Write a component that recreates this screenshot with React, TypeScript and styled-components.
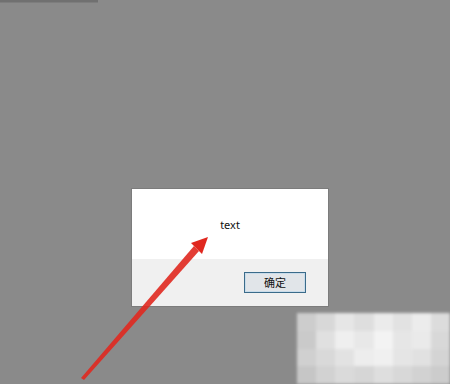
import * as React from 'react';
import styled, { createGlobalStyle } from 'styled-components';

const GlobalStyle = createGlobalStyle`
    html, body {
        margin: 0;
        padding: 0;
        background: #8a8a8a;
        font-family: 'Noto Sans', 'Liberation Sans', 'Noto Sans CJK SC', sans-serif;
    }
`;

const WATERMARK_CELLS = [
    '#cdcdcd', '#d8d8d8', '#e6e6e6', '#dedede', '#ebebeb', '#e2e2e2', '#ececec', '#dcdcdc',
    '#cacaca', '#e0e0e0', '#efefef', '#e8e8e8', '#f3f3f3', '#e6e6e6', '#eaeaea', '#d8d8d8',
    '#d0d0d0', '#d9d9d9', '#e2e2e2', '#ededed', '#f0f0f0', '#e5e5e5', '#e1e1e1', '#d4d4d4',
    '#c6c6c6', '#d2d2d2', '#dadada', '#d6d6d6', '#dedede', '#d8d8d8', '#d2d2d2', '#cccccc',
];

const App: React.FC = () => (
    <Root>
        <GlobalStyle />
        <TopLine />
        <Dialog>
            <MessageArea>
                <Message>text</Message>
            </MessageArea>
            <Footer>
                <OkButton>确定</OkButton>
            </Footer>
        </Dialog>
        <Arrow width="450" height="384" viewBox="0 0 450 384">
            <polygon points="81,378 84,380 199,251 194,246" fill="#e0281f" opacity="0.9" />
            <polygon points="208,237 191,243 202,254" fill="#e0281f" />
        </Arrow>
        <Watermark>
            {WATERMARK_CELLS.map((color, index) => (
                <WatermarkCell key={index} $color={color} />
            ))}
        </Watermark>
    </Root>
);

const Root = styled.div`
    position: relative;
    width: 450px;
    height: 384px;
    overflow: hidden;
    background: #8a8a8a;
    display: flex;
    flex-direction: column;
`;

const TopLine = styled.div`
    width: 98px;
    height: 2px;
    background: #707070;
    border-bottom: 1px solid #7d7d7d;
`;

const Dialog = styled.div`
    margin: 186px 0 0 132px;
    width: 196px;
    height: 117px;
    display: flex;
    flex-direction: column;
    box-shadow: 0 0 0 1px #7c7c7c;
`;

const MessageArea = styled.div`
    height: 70px;
    background: #ffffff;
    display: flex;
    align-items: center;
    justify-content: center;
`;

const Message = styled.span`
    font-size: 11px;
    color: #111;
    margin: 0 0 0 0;
`;

const Footer = styled.div`
    flex: 1;
    background: #f0f0f0;
    display: flex;
    justify-content: flex-end;
    align-items: flex-start;
    padding: 13px 22px 0 0;
`;

const OkButton = styled.button`
    width: 62px;
    height: 21px;
    padding: 0;
    border: 1px solid #3a6b8a;
    box-shadow: inset 0 0 0 1px #c9dcea;
    background: #e1e5e9;
    font-family: 'Noto Sans CJK SC', sans-serif;
    font-size: 11px;
    color: #111;
    line-height: 19px;
`;

const Arrow = styled.svg`
    position: absolute;
    left: 0;
    top: 0;
    pointer-events: none;
`;

const Watermark = styled.div`
    position: absolute;
    left: 297px;
    top: 313px;
    width: 153px;
    height: 71px;
    display: grid;
    grid-template-columns: repeat(8, 1fr);
    grid-template-rows: repeat(4, 1fr);
    filter: blur(1.5px);
`;

const WatermarkCell = styled.div<{ $color: string }>`
    background: ${({ $color }) => $color};
`;

export default App;
